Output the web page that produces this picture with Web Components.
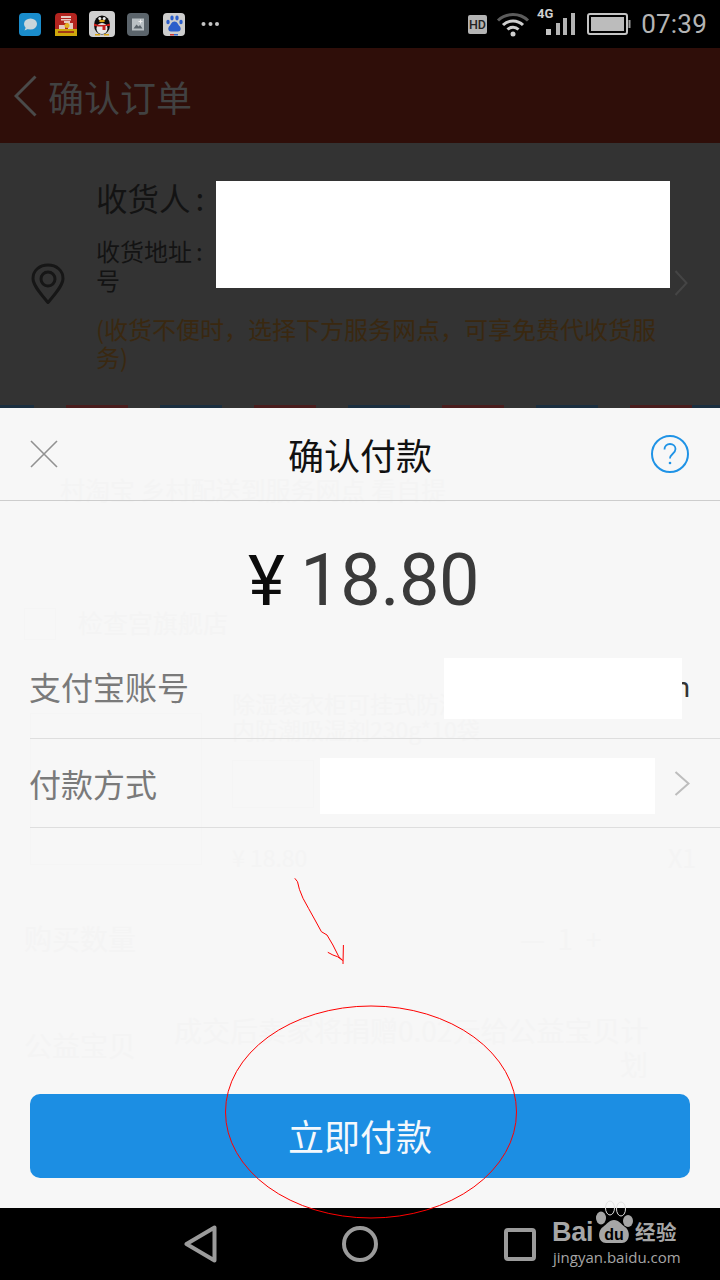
<!DOCTYPE html>
<html lang="zh-CN">
<head>
<meta charset="utf-8">
<title>确认付款</title>
<style>
  html,body{margin:0;padding:0;background:#000;}
  body{font-family:"Noto Sans CJK SC","Noto Sans",sans-serif;}
  #app{position:relative;width:720px;height:1280px;overflow:hidden;display:flex;flex-direction:column;}
</style>
</head>
<body>
<div id="app">
  <status-bar></status-bar>
  <order-header>确认订单</order-header>
  <address-block></address-block>
  <pay-sheet amount="18.80" title="确认付款">
    <pay-row label="支付宝账号" value="m"></pay-row>
    <pay-row label="付款方式" arrow></pay-row>
    <pay-button slot="action">立即付款</pay-button>
  </pay-sheet>
  <nav-bar></nav-bar>

  <redact-box style="left:216px;top:181px;width:454px;height:107px"></redact-box>
  <redact-box style="left:444px;top:658px;width:238px;height:61px"></redact-box>
  <redact-box style="left:320px;top:758px;width:335px;height:56px"></redact-box>
  <baidu-mark></baidu-mark>
  <pen-marks></pen-marks>
</div>

<script>
const cjk = `"Noto Sans CJK SC","Noto Sans",sans-serif`;

class StatusBar extends HTMLElement {
  constructor() {
    super();
    this.attachShadow({ mode: "open" });
    this.shadowRoot.innerHTML = `
<style>
  :host{display:flex;align-items:center;justify-content:space-between;height:48px;background:#000;flex:none;color:#b4b4b4;}
  .left{display:flex;align-items:center;padding-left:19px;}
  .right{display:flex;align-items:center;padding-right:13px;}
  svg{display:block;flex:none;overflow:visible;}
  .time{font:26px/48px Roboto,sans-serif;margin-left:10px;letter-spacing:.2px;}
</style>
<div class="left">
  <svg width="22" height="23" viewBox="0 0 22 23" style="margin-right:14px">
    <rect width="22" height="23" rx="4" fill="#1a8ccb"/>
    <ellipse cx="11.500" cy="11" rx="6.500" ry="5.600" fill="#c9d5da"/>
    <path d="M7 14l-1.500 3.500 4.500-2z" fill="#c9d5da"/>
  </svg>
  <svg width="22" height="23" viewBox="0 0 22 23" style="margin-right:12px">
    <rect width="22" height="23" rx="4" fill="#b3241f"/>
    <rect y="16" width="22" height="7" fill="#cfa80c"/>
    <path d="M6 3h10v2H6zM6 6h10v1.500H6zM9 8h6v2H9zM4 12h6v4H4zM13 10h5v6h-5z" fill="#e6c9c0"/>
    <circle cx="12" cy="12.500" r="2.500" fill="#e1b020"/>
    <path d="M3 18h16v2H3z" fill="#a33a14"/>
  </svg>
  <svg width="26" height="26" viewBox="0 0 26 26" style="margin-right:12px">
    <rect width="26" height="26" rx="4" fill="#cfcfcf"/>
    <ellipse cx="13" cy="14" rx="8" ry="9.500" fill="#0a0a0a"/>
    <ellipse cx="13" cy="17.500" rx="5.500" ry="5.500" fill="#e6e6e6"/>
    <circle cx="10.800" cy="7.500" r="1.500" fill="#eee"/>
    <circle cx="15.200" cy="7.500" r="1.500" fill="#eee"/>
    <ellipse cx="13" cy="10" rx="3" ry="1.200" fill="#dda514"/>
    <path d="M5 12.500q8 3 16 0v2.500h-4.500v4h-3v-3.500q-4 0-8.500-.5z" fill="#c8201c"/>
    <path d="M6 23h5v1.500H6zM15 23h5v1.500h-5z" fill="#d9a514"/>
  </svg>
  <svg width="22" height="23" viewBox="0 0 22 23" style="margin-right:14px">
    <rect width="22" height="23" rx="4" fill="#5b646b"/>
    <rect x="5" y="5.500" width="12" height="12" fill="#b9c0c4"/>
    <path d="M6.500 15.500l3-4 2 2 1.500-1.500 2.500 3.500z" fill="#5b646b"/>
    <path d="M13 6.500h1v1.500h1.500v1H14v1.500h-1V9h-1.500V8H13z" fill="#eee"/>
  </svg>
  <svg width="22" height="23" viewBox="0 0 22 23" style="margin-right:16px">
    <rect width="22" height="23" rx="4" fill="#cdcdcd"/>
    <g fill="#2c5ecb">
      <ellipse cx="5" cy="9" rx="1.700" ry="2.200"/><ellipse cx="9" cy="5" rx="1.700" ry="2.400"/>
      <ellipse cx="14" cy="5" rx="1.700" ry="2.400"/><ellipse cx="18" cy="9" rx="1.700" ry="2.200"/>
      <path d="M11.500 8.500c3 0 3.500 3 5 4.500 2 2 1.500 5.500-1.500 5.500h-7c-3 0-3.500-3.500-1.500-5.500 1.500-1.500 2-4.500 5-4.500z"/>
    </g>
    <rect x="7" y="21" width="4" height="1.500" fill="#c33"/><rect x="11" y="21" width="4" height="1.500" fill="#36c"/>
  </svg>
  <svg width="18" height="6" viewBox="0 0 18 6">
    <circle cx="2.500" cy="3" r="2" fill="#c4c4c4"/><circle cx="9.500" cy="3" r="2" fill="#c4c4c4"/><circle cx="16" cy="3" r="2" fill="#c4c4c4"/>
  </svg>
</div>
<div class="right">
  <svg width="19" height="19" viewBox="0 0 19 19" style="margin-right:9px">
    <rect width="19" height="19" rx="2" fill="#b4b4b4"/>
    <text x="9.500" y="14" text-anchor="middle" font-family="Roboto,sans-serif" font-size="12.500" font-weight="500" fill="#222">HD</text>
  </svg>
  <svg width="34" height="26" viewBox="0 0 34 26" style="margin-right:7px">
    <g fill="none" stroke-linecap="butt">
      <path d="M2 9.500C10 1.500 24 1.500 32 9.500" stroke="#5c5c5c" stroke-width="3"/>
      <path d="M7 14C12.500 8.500 21.500 8.500 27 14" stroke="#cfcfcf" stroke-width="3"/>
      <path d="M11.500 18.500c3-3 8-3 11 0" stroke="#cfcfcf" stroke-width="3"/>
    </g>
    <circle cx="17" cy="23" r="2.500" fill="#cfcfcf"/>
  </svg>
  <svg width="40" height="30" viewBox="0 0 40 30" style="margin-right:10px">
    <text x="0" y="9" font-family="Roboto,sans-serif" font-size="13" font-weight="700" fill="#cfcfcf">4G</text>
    <rect x="9" y="20" width="5" height="6" fill="#c4c4c4"/>
    <rect x="19" y="14" width="4" height="12" fill="#b4b4b4"/>
    <rect x="26" y="9" width="4" height="17" fill="#b4b4b4"/>
    <rect x="34" y="4" width="4" height="22" fill="#b4b4b4"/>
  </svg>
  <svg width="44" height="22" viewBox="0 0 44 22">
    <rect x="1" y="1" width="39" height="20" rx="2" fill="none" stroke="#c4c4c4" stroke-width="2"/>
    <rect x="4" y="4" width="33" height="14" fill="#bcbcbc"/>
    <rect x="41.500" y="7" width="2" height="8" fill="#9a9a9a"/>
  </svg>
  <span class="time">07:39</span>
</div>`;
  }
}
customElements.define("status-bar", StatusBar);

class OrderHeader extends HTMLElement {
  constructor() {
    super();
    this.attachShadow({ mode: "open" });
    this.shadowRoot.innerHTML = `
<style>
  :host{display:flex;align-items:center;height:95px;background:#2f0e09;flex:none;padding-left:14px;color:#414141;font:36px/1 ${cjk};box-sizing:border-box;}
  svg{display:block;margin-right:11px;}
</style>
<svg width="23" height="42" viewBox="0 0 23 42"><path d="M21.500 1.500L2 21l19.500 19.500" fill="none" stroke="#4a4a4a" stroke-width="3"/></svg>
<slot></slot>`;
  }
}
customElements.define("order-header", OrderHeader);

class AddressBlock extends HTMLElement {
  constructor() {
    super();
    this.attachShadow({ mode: "open" });
    this.shadowRoot.innerHTML = `
<style>
  :host{display:flex;flex-direction:column;height:265px;background:#333;flex:none;position:relative;box-sizing:border-box;font-family:${cjk};}
  .main{flex:1;display:flex;align-items:flex-start;}
  .pin{width:96px;flex:none;padding:120px 0 0 31px;box-sizing:border-box;}
  .pin svg,.more svg{display:block;}
  .body{flex:1;padding-top:34px;color:#131313;}
  .name{font-size:31.500px;line-height:40px;}
  .name span{margin-left:5px;}
  .addr{font-size:24px;line-height:29px;margin-top:19px;}
  .addr span{margin-left:4px;}
  .tip{font-size:24px;line-height:28px;color:#3a2810;margin-top:21px;width:570px;}
  .more{position:absolute;left:674px;top:127px;}
  .stripes{height:3px;flex:none;background:repeating-linear-gradient(90deg,#1b2f40 0 34px,transparent 34px 66px,#4a1d1d 66px 128px,transparent 128px 160px,#1b2f40 160px 222px,transparent 222px 254px,#4a1d1d 254px 316px,transparent 316px 348px,#1b2f40 348px 410px,transparent 410px 442px,#4a1d1d 442px 504px,transparent 504px 536px,#1b2f40 536px 598px,transparent 598px 630px,#4a1d1d 630px 692px,transparent 692px);}
</style>
<div class="main">
  <div class="pin">
    <svg width="34" height="41" viewBox="0 0 34 41"><path d="M17 39.500C10 31 2 22.500 2 15.500 2 7.500 8.500 2 17 2s15 5.500 15 13.500c0 7-8 15.500-15 24z" fill="none" stroke="#161616" stroke-width="3" stroke-linejoin="round"/><circle cx="17" cy="16" r="7" fill="none" stroke="#161616" stroke-width="3"/></svg>
  </div>
  <div class="body">
    <div class="name">收货人<span>:</span></div>
    <div class="addr">收货地址<span>:</span><br>号</div>
    <div class="tip">(收货不便时，选择下方服务网点，可享免费代收货服务)</div>
  </div>
</div>
<div class="more"><svg width="14" height="26" viewBox="0 0 14 26"><path d="M1.500 1l11 12-11 12" fill="none" stroke="#454545" stroke-width="2"/></svg></div>
<div class="stripes"></div>`;
  }
}
customElements.define("address-block", AddressBlock);

class PaySheet extends HTMLElement {
  constructor() {
    super();
    this.attachShadow({ mode: "open" });
    this.shadowRoot.innerHTML = `
<style>
  :host{display:flex;flex-direction:column;height:800px;background:#f7f7f7;flex:none;position:relative;font-family:${cjk};}
  .ghost{position:absolute;inset:0;color:#f4f4f4;font-size:25px;line-height:1;pointer-events:none;}
  .ghost span{position:absolute;white-space:nowrap;}
  .ghost i{position:absolute;display:block;border:1px solid #f5f5f5;}
  .bar{position:relative;height:92px;flex:none;display:flex;align-items:center;justify-content:space-between;padding:0 30px;border-bottom:1px solid #cdcdcd;}
  .title{font-size:36px;color:#111;line-height:1;position:absolute;left:0;right:0;text-align:center;}
  .bar svg{display:block;position:relative;}
  .amount{position:relative;height:143px;box-sizing:border-box;padding:17px 0 0 7px;flex:none;display:flex;align-items:center;justify-content:center;color:#3a3a3a;font:72px/1 Roboto,sans-serif;letter-spacing:-.4px;}
  .amount b{font-weight:400;color:#0c0c0c;margin-right:16px;font-size:70px;}
  .rows{position:relative;flex:none;margin-left:30px;}
  .action{position:relative;margin-top:auto;padding:0 30px 30px;}
</style>
<div class="ghost">
  <span style="left:60px;top:69px;">村淘宝 乡村配送到服务网点 看自提</span>
  <i style="left:24px;top:200px;width:30px;height:30px"></i>
  <span style="left:78px;top:202px;">检查宫旗舰店</span>
  <i style="left:30px;top:305px;width:170px;height:150px"></i>
  <span style="left:232px;top:284px;font-size:23px">除湿袋衣柜可挂式防潮</span>
  <span style="left:232px;top:310px;font-size:23px">内防潮吸湿剂230g*10袋</span>
  <i style="left:232px;top:352px;width:80px;height:46px"></i>
  <span style="left:232px;top:438px;font-size:23px">¥ 18.80</span>
  <span style="left:668px;top:437px;">X1</span>
  <span style="left:24px;top:516px;font-size:28px">购买数量</span>
  <span style="left:520px;top:516px;font-size:28px">— &nbsp;1&nbsp; +</span>
  <span style="left:24px;top:623px;font-size:28px">公益宝贝</span>
  <span style="left:174px;top:608px;font-size:28px">成交后卖家将捐赠0.02元给公益宝贝计</span>
  <span style="left:620px;top:642px;font-size:28px">划</span>
</div>
<div class="bar">
  <svg width="28" height="28" viewBox="0 0 28 28"><path d="M1 1l26 26M27 1L1 27" fill="none" stroke="#919191" stroke-width="1.600"/></svg>
  <span class="title"></span>
  <svg width="40" height="40" viewBox="0 0 40 40"><circle cx="20" cy="20" r="18" fill="none" stroke="#1f93e6" stroke-width="2"/><path d="M14.500 15.500c0-3.500 2.500-5.500 5.500-5.500s5.500 2 5.500 5c0 4.500-5.500 5-5.500 9.500" fill="none" stroke="#1f93e6" stroke-width="1.800"/><circle cx="20" cy="29" r="1.300" fill="#1f93e6"/></svg>
</div>
<div class="amount"><b>¥</b><span class="num"></span></div>
<div class="rows"><slot></slot></div>
<div class="action"><slot name="action"></slot></div>`;
    this.shadowRoot.querySelector(".title").textContent = this.getAttribute("title");
    this.shadowRoot.querySelector(".num").textContent = this.getAttribute("amount");
  }
}
customElements.define("pay-sheet", PaySheet);

class PayRow extends HTMLElement {
  constructor() {
    super();
    this.attachShadow({ mode: "open" });
    this.shadowRoot.innerHTML = `
<style>
  :host{display:flex;align-items:center;justify-content:space-between;border-bottom:1px solid #dedede;padding:0 30px 10px 0;color:#7a7a7a;font-size:32px;box-sizing:border-box;height:95px;}
  :host([arrow]){height:89px;padding:0 30px 0 0;}
  .label{margin-left:-1px;}
  .value{color:#333;font:28px/1 Roboto,sans-serif;margin-top:4px;}
  :host([arrow]) .value{margin-top:0;}
  svg{display:block;}
</style>
<span class="label"></span>
<span class="value"></span>`;
    this.shadowRoot.querySelector(".label").textContent = this.getAttribute("label");
    this.shadowRoot.querySelector(".value").textContent = this.getAttribute("value") || "";
    if (this.hasAttribute("arrow")) {
      this.shadowRoot.querySelector(".value").innerHTML =
        '<svg width="16" height="25" viewBox="0 0 16 25"><path d="M1.500 1l13 11.500-13 11.500" fill="none" stroke="#bdbdbd" stroke-width="2"/></svg>';
    }
  }
}
customElements.define("pay-row", PayRow);

class PayButton extends HTMLElement {
  constructor() {
    super();
    this.attachShadow({ mode: "open" });
    this.shadowRoot.innerHTML = `
<style>
  :host{display:block;}
  button{display:block;width:100%;height:84px;border:0;border-radius:10px;background:#1c8ee3;color:#f4f8fc;font:36px/1 ${cjk};padding:0 0 2px;}
</style>
<button><slot></slot></button>`;
  }
}
customElements.define("pay-button", PayButton);

class NavBar extends HTMLElement {
  constructor() {
    super();
    this.attachShadow({ mode: "open" });
    this.shadowRoot.innerHTML = `
<style>
  :host{display:flex;align-items:center;height:72px;background:#000;flex:none;padding-left:184px;box-sizing:border-box;}
  svg{display:block;flex:none;}
</style>
<svg width="33" height="38" viewBox="0 0 33 38" style="margin-right:125px"><path d="M30.500 2.500v33L2.500 19z" fill="none" stroke="#9b9b9b" stroke-width="4" stroke-linejoin="round"/></svg>
<svg width="36" height="36" viewBox="0 0 36 36" style="margin-right:126px"><circle cx="18" cy="18" r="16" fill="none" stroke="#9b9b9b" stroke-width="4"/></svg>
<svg width="32" height="33" viewBox="0 0 32 33"><rect x="2" y="2" width="28" height="29" rx="2" fill="none" stroke="#9b9b9b" stroke-width="4"/></svg>`;
  }
}
customElements.define("nav-bar", NavBar);

class RedactBox extends HTMLElement {
  constructor() {
    super();
    this.attachShadow({ mode: "open" });
    this.shadowRoot.innerHTML = `<style>:host{position:absolute;display:block;background:#fff;}</style>`;
  }
}
customElements.define("redact-box", RedactBox);

// watermark sits over the sheet edge and the nav bar
class BaiduMark extends HTMLElement {
  constructor() {
    super();
    this.attachShadow({ mode: "open" });
    this.shadowRoot.innerHTML = `
<style>
  :host{position:absolute;left:553px;top:1200px;width:130px;height:66px;display:block;color:#a6a6a6;}
  svg{position:absolute;left:0;top:0;}
  .bai{position:absolute;left:-1px;top:17px;font:700 27px/30px "Liberation Sans",sans-serif;letter-spacing:-.3px;}
  .jy{position:absolute;left:82px;top:18px;font:700 20.500px/26px ${cjk};letter-spacing:.5px;}
  .url{position:absolute;left:0;top:47px;font:15px/20px "Open Sans",sans-serif;white-space:nowrap;}
</style>
<svg width="130" height="50" viewBox="0 0 130 50">
  <ellipse cx="57" cy="8" rx="4.500" ry="7" fill="none" stroke="#e2e2e2" stroke-width="1"/>
  <ellipse cx="68" cy="9" rx="4.500" ry="7" fill="none" stroke="#e2e2e2" stroke-width="1"/>
  <ellipse cx="48" cy="18" rx="5" ry="6.500" fill="#a6a6a6"/>
  <ellipse cx="75" cy="21" rx="5" ry="6" fill="#a6a6a6"/>
  <path d="M61 20c5 0 7 4 11 7 6 4 5 16-3 16H53c-8 0-9-12-3-16 4-3 6-7 11-7z" fill="#a6a6a6"/>
  <text x="61" y="40" text-anchor="middle" font-family="Liberation Sans,sans-serif" font-size="16" font-weight="700" fill="#000">du</text>
</svg>
<span class="bai">Bai</span>
<span class="jy">经验</span>
<span class="url">jingyan.baidu.com</span>`;
  }
}
customElements.define("baidu-mark", BaiduMark);

// hand drawn red arrow and circle on top of the screenshot
class PenMarks extends HTMLElement {
  constructor() {
    super();
    this.attachShadow({ mode: "open" });
    this.shadowRoot.innerHTML = `
<style>
  :host{position:absolute;left:0;top:0;width:720px;height:1280px;display:block;pointer-events:none;}
  svg{display:block;}
</style>
<svg width="720" height="1280" viewBox="0 0 720 1280">
  <g fill="none" stroke="#f00" stroke-width="1">
    <ellipse cx="371" cy="1112" rx="145.500" ry="106"/>
    <path d="M294.800 878.300L297.500 881.700 299.400 889.300 303 898.300 308.500 908.300 315 920 321.400 931.700 327 935 332.900 945 338.800 956.700 343 960.700"/>
    <path d="M327.800 952.300L332.900 955 337.500 956.700 342 960"/>
    <path d="M343.400 945L343 964"/>
  </g>
</svg>`;
  }
}
customElements.define("pen-marks", PenMarks);
</script>
</body>
</html>
